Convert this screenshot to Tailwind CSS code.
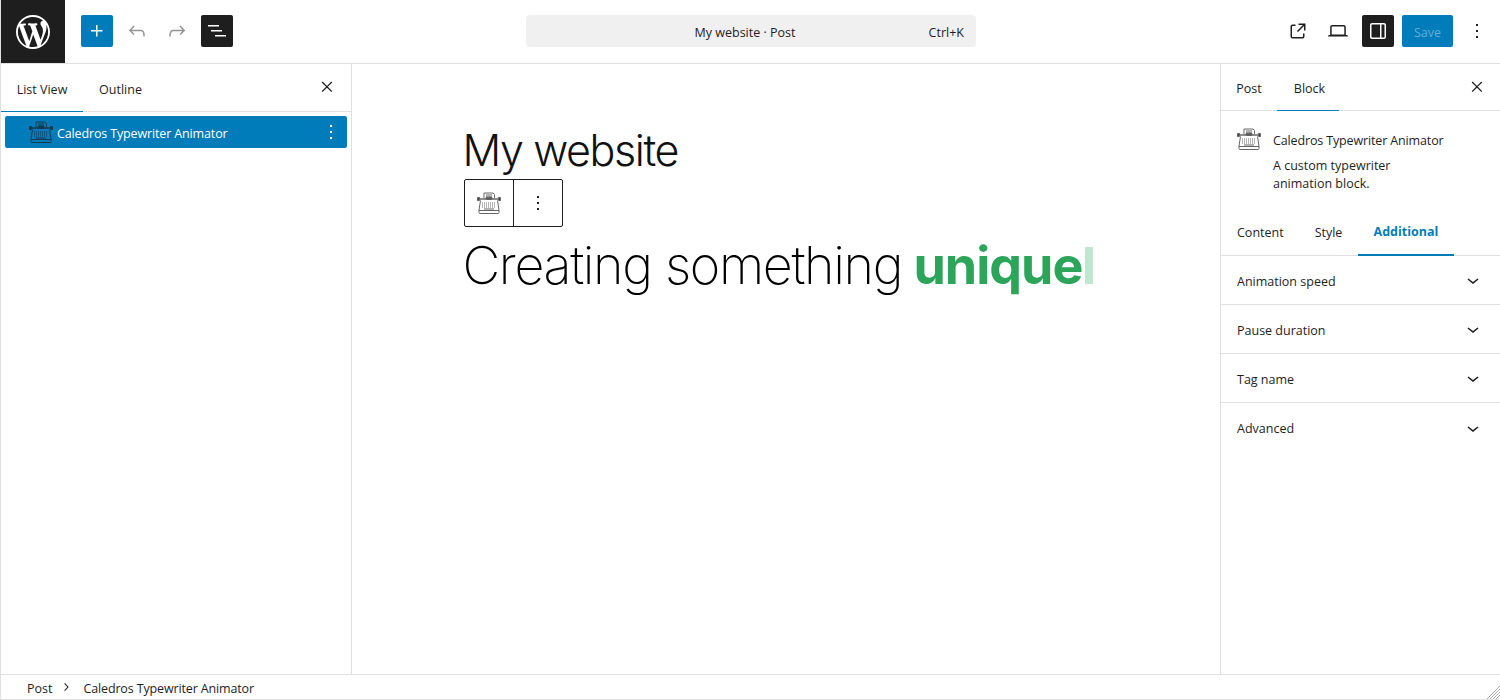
<!DOCTYPE html>
<html lang="en">
<head>
    <meta charset="UTF-8">
    <title>My website - Post</title>
    <script src="https://cdn.jsdelivr.net/npm/@tailwindcss/browser@4"></script>
</head>
<body class="bg-white">
<div class="w-[1500px] h-[700px] overflow-hidden flex flex-col border-l border-[#e0e0e0] text-[#1e1e1e] font-['Open_Sans','Noto_Sans',sans-serif] text-[12.5px]">

    <!-- top bar -->
    <header class="h-[64px] shrink-0 flex items-center border-b border-[#e0e0e0]">
        <div class="w-[64px] h-[63px] bg-[#1e1e1e] flex items-center justify-center">
            <svg class="w-[34px] h-[34px] fill-white" viewBox="0 0 20 20"><path d="M20 10c0-5.51-4.49-10-10-10C4.48 0 0 4.49 0 10c0 5.52 4.48 10 10 10 5.51 0 10-4.48 10-10zM7.78 15.37L4.37 6.22c.55-.02 1.17-.08 1.17-.08.5-.06.44-1.13-.06-1.11 0 0-1.45.11-2.37.11-.18 0-.37 0-.58-.01C4.12 2.69 6.87 1.11 10 1.11c2.33 0 4.45.87 6.05 2.34-.68-.11-1.65.39-1.65 1.58 0 .74.45 1.36.9 2.1.35.61.55 1.36.55 2.46 0 1.49-1.4 5-1.4 5l-3.03-8.37c.54-.02.82-.17.82-.17.5-.05.44-1.25-.06-1.22 0 0-1.44.12-2.38.12-.87 0-2.33-.12-2.33-.12-.5-.03-.56 1.2-.06 1.22l.92.08 1.26 3.41zM17.41 10c.24-.64.74-1.87.43-4.25.7 1.29 1.05 2.71 1.05 4.25 0 3.29-1.73 6.24-4.4 7.78.97-2.59 1.94-5.2 2.92-7.78zM6.1 18.09C3.12 16.65 1.11 13.53 1.11 10c0-1.3.23-2.48.72-3.59C3.25 10.3 4.67 14.2 6.1 18.09zm4.03-6.63l2.58 6.98c-.86.29-1.76.45-2.71.45-.79 0-1.57-.11-2.29-.33.81-2.38 1.62-4.74 2.42-7.1z"/></svg>
        </div>
        <div class="w-[461px] mb-[1px] flex items-center pl-[16px]">
            <div class="w-[32px] h-[32px] bg-[#007cba] rounded-[2px] flex items-center justify-center">
                <svg class="w-[24px] h-[24px] fill-white" viewBox="0 0 24 24"><path d="M11 12.5V17.5H12.5V12.5H17.5V11H12.5V6H11V11H6V12.5H11Z"/></svg>
            </div>
            <div class="w-[40px] ml-[4px] flex justify-center">
                <svg class="w-[24px] h-[24px] fill-[#949494]" viewBox="0 0 24 24"><path d="M18.3 11.7c-.6-.6-1.4-.9-2.3-.9H6.7l2.9-3.3-1.1-1-4.5 5L8.5 16l1-1-2.7-2.7H16c.5 0 .9.2 1.3.5 1 1 1 3.4 1 4.5v.3h1.5v-.2c0-1.5 0-4.3-1.5-5.7z"/></svg>
            </div>
            <div class="w-[40px] flex justify-center">
                <svg class="w-[24px] h-[24px] fill-[#949494]" viewBox="0 0 24 24"><path d="M15.6 6.5l-1.1 1 2.9 3.3H8c-.9 0-1.7.3-2.3.9-1.4 1.5-1.4 4.2-1.4 5.6v.2h1.5v-.3c0-1.1 0-3.5 1-4.5.3-.3.7-.5 1.3-.5h9.2L14.5 15l1.1 1.1 4.6-4.6-4.6-5z"/></svg>
            </div>
            <div class="w-[32px] h-[32px] ml-[4px] bg-[#1e1e1e] rounded-[2px] flex items-center justify-center">
                <svg class="w-[24px] h-[24px] fill-white" viewBox="0 0 24 24"><path d="M3 6h11v1.5H3V6Zm3 5h11v1.5H6V11Zm4 5h11v1.5H10V16Z"/></svg>
            </div>
        </div>
        <div class="w-[450px] h-[32px] mb-[1px] pt-[5px] bg-[#f0f0f0] rounded-[4px] flex items-center relative">
            <span class="w-full text-center pr-[12px]">My website · Post</span>
            <span class="absolute right-[12px]">Ctrl+K</span>
        </div>
        <div class="flex-1 mb-[1px] flex items-center justify-end pr-[11px]">
            <svg class="w-[24px] h-[24px] fill-[#1e1e1e]" viewBox="0 0 24 24"><path d="M19.5 4.5h-7V6h4.44l-5.97 5.97 1.06 1.06L18 7.06v4.44h1.5v-7Zm-13 1a2 2 0 0 0-2 2v10a2 2 0 0 0 2 2h10a2 2 0 0 0 2-2v-3H17v3a.5.5 0 0 1-.5.5h-10a.5.5 0 0 1-.5-.5v-10a.5.5 0 0 1 .5-.5h3V5.5h-3Z"/></svg>
            <svg class="w-[24px] h-[24px] ml-[16px] fill-[#1e1e1e]" viewBox="0 0 24 24"><path d="M20.5 16h-.7V8c0-1.1-.9-2-2-2H6.2c-1.1 0-2 .9-2 2v8h-.7c-.8 0-1.5.7-1.5 1.5h20c0-.8-.7-1.5-1.5-1.5zM5.7 8c0-.3.2-.5.5-.5h11.6c.3 0 .5.2.5.5v7.6H5.7V8z"/></svg>
            <div class="w-[32px] h-[32px] ml-[12px] bg-[#1e1e1e] rounded-[2px] flex items-center justify-center">
                <svg class="w-[24px] h-[24px] fill-white" viewBox="0 0 24 24"><path d="M18 4H6c-1.1 0-2 .9-2 2v12c0 1.1.9 2 2 2h12c1.1 0 2-.9 2-2V6c0-1.1-.9-2-2-2zm-4 14.5H6c-.3 0-.5-.2-.5-.5V6c0-.3.2-.5.5-.5h8v13zm4.500-.5c0 .3-.2.5-.5.5h-2.500v-13H18c.3 0 .5.2.5.5v12z"/></svg>
            </div>
            <div class="w-[51px] h-[32px] ml-[8px] pt-[4px] bg-[#007cba] rounded-[2px] flex items-center justify-center text-white/40">Save</div>
            <svg class="w-[24px] h-[24px] ml-[12px] fill-[#1e1e1e]" viewBox="0 0 24 24"><path d="M13 19h-2v-2h2v2zm0-6h-2v-2h2v2zm0-6h-2V5h2v2z"/></svg>
        </div>
    </header>

    <div class="flex-1 flex min-h-0">
        <!-- list view panel -->
        <aside class="w-[351px] shrink-0 border-r border-[#e0e0e0]">
            <div class="h-[48px] flex items-center border-b border-[#e0e0e0] relative">
                <div class="w-[82px] h-[48px] flex items-center justify-center pt-[6px] border-b border-[#007cba]">List View</div>
                <div class="w-[75px] flex items-center justify-center pt-[5px]">Outline</div>
                <svg class="absolute right-[14px] top-[13px] w-[20px] h-[20px] fill-[#1e1e1e]" viewBox="0 0 24 24"><path d="M13 11.800l5.300-5.300-1.100-1.100-5.200 5.300-5.300-5.300-1.100 1.100 5.300 5.300-5.300 5.200 1.100 1.100 5.300-5.300 5.200 5.300 1.100-1.100z"/></svg>
            </div>
            <div class="mx-[4px] mt-[4px] h-[32px] bg-[#007cba] rounded-[2px] flex items-center text-white relative">
                <svg class="w-[24px] h-[22px] ml-[24px] mr-[4px] shrink-0" viewBox="0 0 24 22" fill="none" stroke="#17384d" stroke-width="1"><path d="M7 6V1h9l1.500 1.500V6"/><path d="M9 3h6M9 4.800h6"/><path d="M9 5.500h6v2H9z" fill="#17384d"/><path d="M2 7h20" stroke-width="1.500"/><path d="M.5 5.500h2v3h-2zM21.500 5.500h2v3h-2z" fill="#17384d"/><path d="M3.500 8.500L2 18v2.500c0 .7.5 1 1 1h18c.5 0 1-.3 1-1V18L20.500 8.500"/><path d="M5 11h14M5 13h14M5 15h14" stroke-dasharray="1 1"/><path d="M7 17h10M2 18.500h20"/></svg>
                <span class="pt-[4px] tracking-[-0.14px]">Caledros Typewriter Animator</span>
                <svg class="absolute right-[4px] top-[4px] w-[24px] h-[24px] fill-white" viewBox="0 0 24 24"><path d="M13 19h-2v-2h2v2zm0-6h-2v-2h2v2zm0-6h-2V5h2v2z"/></svg>
            </div>
        </aside>

        <!-- canvas -->
        <main class="flex-1 min-w-0">
            <div class="w-[645px] mx-auto pt-[58px]">
                <h1 class="h-[57px] leading-[57px] -ml-[1px] text-[43px] font-light tracking-[-1.4px] font-['Inter',sans-serif] text-[#111]">My website</h1>
                <div class="w-[99px] h-[48px] flex border border-[#1e1e1e] rounded-[2px]">
                    <div class="w-[49px] flex items-center justify-center border-r border-[#1e1e1e]">
                        <svg class="w-[24px] h-[22px]" viewBox="0 0 24 22" fill="none" stroke="#666" stroke-width="1"><path d="M7 6V1h9l1.500 1.500V6"/><path d="M9 3h6M9 4.800h6"/><path d="M9 5.500h6v2H9z" fill="#333"/><path d="M2 7h20" stroke-width="1.500"/><path d="M.5 5.500h2v3h-2zM21.500 5.500h2v3h-2z" fill="#444"/><path d="M3.500 8.500L2 18v2.500c0 .7.5 1 1 1h18c.5 0 1-.3 1-1V18L20.500 8.500"/><path d="M5 11h14M5 13h14M5 15h14" stroke-dasharray="1 1"/><path d="M7 17h10M2 18.500h20"/></svg>
                    </div>
                    <div class="flex-1 flex items-center justify-center">
                        <svg class="w-[24px] h-[24px] fill-[#1e1e1e]" viewBox="0 0 24 24"><path d="M13 19h-2v-2h2v2zm0-6h-2v-2h2v2zm0-6h-2V5h2v2z"/></svg>
                    </div>
                </div>
                <p class="mt-[8px] -ml-[1px] flex items-baseline whitespace-nowrap leading-[62px] text-[52px] font-['Inter',sans-serif] font-extralight tracking-[-1.35px] text-black">Creating something&nbsp;<span class="-ml-[2px] font-bold text-[#2ca55b] tracking-[-1px]">unique</span><span class="inline-block ml-[3px] w-[8px] h-[37px] bg-[#c0e6cd]"></span></p>
            </div>
        </main>

        <!-- settings sidebar -->
        <aside class="w-[280px] shrink-0 border-l border-[#e0e0e0]">
            <div class="h-[47px] flex items-center border-b border-[#e0e0e0] relative">
                <div class="w-[56px] flex items-center justify-center pt-[5px]">Post</div>
                <div class="w-[62px] h-[47px] flex items-center justify-center pt-[5px] pl-[3px] border-b border-[#007cba]">Block</div>
                <svg class="absolute right-[13px] top-[13px] w-[20px] h-[20px] fill-[#1e1e1e]" viewBox="0 0 24 24"><path d="M13 11.800l5.300-5.300-1.100-1.100-5.200 5.300-5.300-5.300-1.100 1.100 5.300 5.300-5.300 5.200 1.100 1.100 5.300-5.300 5.200 5.300 1.100-1.100z"/></svg>
            </div>
            <div class="flex px-[16px] pt-[17px] h-[97px]">
                <svg class="w-[24px] h-[22px] mr-[12px] shrink-0" viewBox="0 0 24 22" fill="none" stroke="#666" stroke-width="1"><path d="M7 6V1h9l1.500 1.500V6"/><path d="M9 3h6M9 4.800h6"/><path d="M9 5.500h6v2H9z" fill="#333"/><path d="M2 7h20" stroke-width="1.500"/><path d="M.5 5.500h2v3h-2zM21.500 5.500h2v3h-2z" fill="#444"/><path d="M3.500 8.500L2 18v2.500c0 .7.5 1 1 1h18c.5 0 1-.3 1-1V18L20.500 8.500"/><path d="M5 11h14M5 13h14M5 15h14" stroke-dasharray="1 1"/><path d="M7 17h10M2 18.500h20"/></svg>
                <div>
                    <div class="h-[24px] mt-[1px] leading-[24px] tracking-[-0.14px]">Caledros Typewriter Animator</div>
                    <p class="w-[150px] mt-[4px] leading-[18px]">A custom typewriter animation block.</p>
                </div>
            </div>
            <div class="h-[48px] flex items-center border-b border-[#e0e0e0]">
                <div class="w-[78px] pl-[16px] pt-[4px] h-[47px] flex items-center">Content</div>
                <div class="w-[59px] h-[47px] pt-[4px] flex items-center justify-center">Style</div>
                <div class="w-[96px] h-[48px] pt-[3px] pb-[1px] flex items-center justify-center font-bold text-[#007cba] border-b-2 border-[#007cba] -mb-[1px]">Additional</div>
            </div>
            <div class="h-[49px] flex items-center justify-between pl-[16px] pr-[15px] border-b border-[#e0e0e0]">
                <span class="pt-[4px]">Animation speed</span>
                <svg class="w-[24px] h-[24px] fill-[#1e1e1e]" viewBox="0 0 24 24"><path d="M17.500 11.600L12 16l-5.500-4.400.9-1.200L12 14l4.500-3.600 1 1.200z"/></svg>
            </div>
            <div class="h-[49px] flex items-center justify-between pl-[16px] pr-[15px] border-b border-[#e0e0e0]">
                <span class="pt-[4px]">Pause duration</span>
                <svg class="w-[24px] h-[24px] fill-[#1e1e1e]" viewBox="0 0 24 24"><path d="M17.500 11.600L12 16l-5.500-4.400.9-1.200L12 14l4.500-3.600 1 1.200z"/></svg>
            </div>
            <div class="h-[49px] flex items-center justify-between pl-[16px] pr-[15px] border-b border-[#e0e0e0]">
                <span class="pt-[4px]">Tag name</span>
                <svg class="w-[24px] h-[24px] fill-[#1e1e1e]" viewBox="0 0 24 24"><path d="M17.500 11.600L12 16l-5.500-4.400.9-1.200L12 14l4.500-3.600 1 1.200z"/></svg>
            </div>
            <div class="h-[49px] flex items-center justify-between pl-[16px] pr-[15px]">
                <span class="pt-[4px]">Advanced</span>
                <svg class="w-[24px] h-[24px] fill-[#1e1e1e]" viewBox="0 0 24 24"><path d="M17.500 11.600L12 16l-5.500-4.400.9-1.200L12 14l4.500-3.600 1 1.200z"/></svg>
            </div>
        </aside>
    </div>

    <!-- breadcrumb footer -->
    <footer class="h-[26px] shrink-0 flex items-center border-t border-b border-[#e0e0e0] pl-[26px] relative">
        <span class="pt-[4px]">Post</span>
        <svg class="w-[16px] h-[16px] ml-[6px] mr-[9px] -mt-[1px] fill-[#1e1e1e]" viewBox="0 0 24 24"><path d="M10.600 6L9.400 7l4.600 5-4.600 5 1.200 1 5.400-6z"/></svg>
        <span class="pt-[4px] tracking-[-0.14px]">Caledros Typewriter Animator</span>
        <svg class="absolute right-0 bottom-0 w-[14px] h-[14px] stroke-[#b0b0b0]" viewBox="0 0 14 14" fill="none"><path d="M1 14L14 1M4 14L14 4M7 14L14 7M10 14L14 10"/></svg>
    </footer>
</div>
</body>
</html>
